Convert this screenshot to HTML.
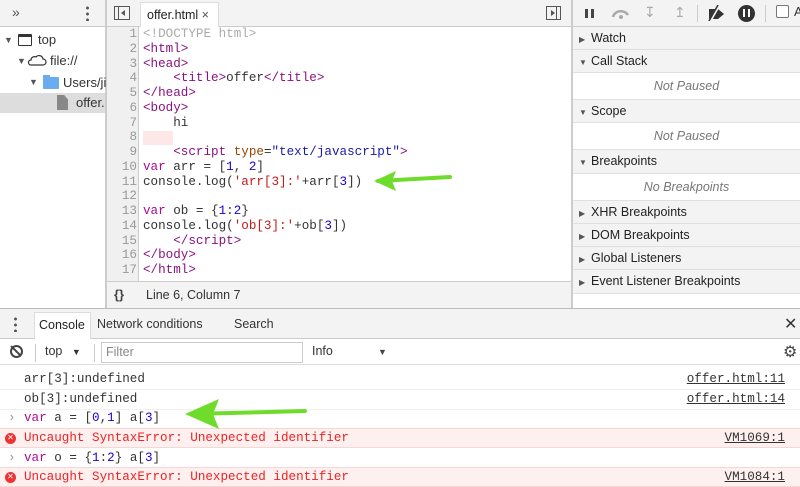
<!DOCTYPE html>
<html><head><meta charset="utf-8"><style>
*{margin:0;padding:0;box-sizing:border-box}
body{width:800px;height:483px;overflow:hidden;background:#fff;font-family:"Liberation Sans",sans-serif;font-size:13px;color:#333;position:relative}
.a{position:absolute}
.mono{font-family:"Liberation Mono",monospace;font-size:12.6px}
.tb{background:#f3f3f3;border-bottom:1px solid #ccc}
.code div{height:14.75px;line-height:14.75px;white-space:pre}
.t{color:#881280}.at{color:#994500}.s{color:#1a1aa6}.r{color:#c41a16}.n{color:#1c00cf}.k{color:#aa0d91}.g{color:#aaa}
.ln div{height:14.75px;line-height:14.75px;text-align:right;color:#999}
.sec{position:absolute;left:573px;width:227px;background:#f3f3f3;border-bottom:1px solid #e0e0e0;font-size:12.5px;color:#222;padding-left:6px}
.sec span{font-size:8px;color:#555;margin-right:5px;display:inline-block;width:7px}
.np{position:absolute;left:573px;width:227px;text-align:center;font-style:italic;color:#777;font-size:12.5px;border-bottom:1px solid #e0e0e0;background:#fff}
.row{position:absolute;left:0;width:800px;height:20px;line-height:19px;border-bottom:1px solid #f0f0f0;white-space:pre}
.err{background:#fff0f0;border-top:1px solid #f7d6d6;border-bottom:1px solid #f7d6d6;color:#e22}
.lnk{position:absolute;right:15px;color:#333;text-decoration:underline}
</style></head><body>
<!-- top toolbars -->
<div class="a tb" style="left:0;top:0;width:800px;height:27px"></div>
<div class="a" style="left:105px;top:0;width:2px;height:308px;background:#ccc"></div>
<div class="a" style="left:571px;top:0;width:2px;height:308px;background:#ccc"></div>
<div class="a" style="left:12px;top:4px;font-size:14px;color:#555">»</div>
<div class="a" style="left:86px;top:5px;width:3px;height:16px;background:radial-gradient(circle,#555 1.3px,transparent 1.6px) 0 0/3px 6px"></div>
<div class="a" style="left:114px;top:6px;width:16px;height:14px;border:1px solid #555"></div><div class="a" style="left:118px;top:7px;width:1px;height:12px;background:#555"></div><div class="a" style="left:121px;top:10px;border:3px solid transparent;border-right:4px solid #555;border-left:0"></div>
<div class="a" style="left:140px;top:2px;width:79px;height:25px;background:#fff;border:1px solid #ddd;border-bottom:none;padding:5px 6px;font-size:12.5px;color:#222">offer.html <span style="color:#555">×</span></div>
<div class="a" style="left:546px;top:6px;width:15px;height:14px;border:1px solid #555"></div><div class="a" style="left:556px;top:7px;width:1px;height:12px;background:#555"></div><div class="a" style="left:551px;top:10px;border:3px solid transparent;border-left:4px solid #555;border-right:0"></div>
<!-- debugger icons -->
<div class="a" style="left:585px;top:9px;width:3px;height:9px;background:#444"></div><div class="a" style="left:591px;top:9px;width:3px;height:9px;background:#444"></div>
<svg class="a" style="left:610px;top:5px" width="22" height="16"><path d="M3 12 A8 7 0 0 1 18 10" stroke="#aaa" stroke-width="2.5" fill="none"/><circle cx="11" cy="12" r="2" fill="#aaa"/></svg>
<div class="a" style="left:644px;top:4px;color:#aaa;font-size:14px">↧</div>
<div class="a" style="left:674px;top:4px;color:#aaa;font-size:14px">↥</div>
<div class="a" style="left:697px;top:5px;width:1px;height:17px;background:#ccc"></div>
<svg class="a" style="left:706px;top:5px" width="22" height="16"><path d="M3 4h9l6 5-6 5H3z" fill="#333"/><path d="M4 16 13 0" stroke="#f3f3f3" stroke-width="3"/><path d="M3 16 12 0" stroke="#333" stroke-width="1.5"/></svg>
<div class="a" style="left:738px;top:5px;width:17px;height:17px;border-radius:50%;background:#333"></div><div class="a" style="left:743px;top:9px;width:2px;height:8px;background:#fff"></div><div class="a" style="left:748px;top:9px;width:2px;height:8px;background:#fff"></div>
<div class="a" style="left:765px;top:5px;width:1px;height:17px;background:#ccc"></div>
<div class="a" style="left:776px;top:5px;width:13px;height:13px;border:1px solid #777;border-radius:2px;background:#fff"></div>
<div class="a" style="left:794px;top:4px;font-size:13px;color:#333">A</div>
<!-- nav tree -->
<div class="a" style="left:4px;top:35px;font-size:9px;color:#555">▼</div>
<div class="a" style="left:18px;top:34px;width:14px;height:12px;border:1.5px solid #333;border-top-width:3px;border-radius:1px"></div>
<div class="a" style="left:38px;top:32px;font-size:13px">top</div>
<div class="a" style="left:17px;top:56px;font-size:9px;color:#555">▼</div>
<svg class="a" style="left:27px;top:53px" width="20" height="13"><path d="M4 12h12a3 3 0 0 0 0-6 4 4 0 0 0-7-2 3.5 3.5 0 0 0-5 3 2.5 2.5 0 0 0 0 5z" fill="none" stroke="#333" stroke-width="1.2"/></svg>
<div class="a" style="left:50px;top:53px;font-size:13px">file://</div>
<div class="a" style="left:29px;top:77px;font-size:9px;color:#555">▼</div>
<div class="a" style="left:43px;top:77px;width:16px;height:12px;background:#6aabf2;border-radius:1px"></div><div class="a" style="left:43px;top:75px;width:7px;height:3px;background:#6aabf2"></div>
<div class="a" style="left:63px;top:75px;font-size:13px">Users/ji</div>
<div class="a" style="left:0;top:93px;width:105px;height:20px;background:#ddd"></div>
<div class="a" style="left:57px;top:95px;width:11px;height:15px;background:#888;clip-path:polygon(0 0,65% 0,100% 30%,100% 100%,0 100%)"></div>
<div class="a" style="left:76px;top:95px;font-size:13px">offer.</div>
<!-- editor -->
<div class="a" style="left:107px;top:27px;width:32px;height:254px;background:#f0f0f0;border-right:1px solid #ccc"></div>
<div class="a" style="left:143px;top:131px;width:30px;height:14px;background:#fde8e8"></div>
<div class="a ln mono" style="left:107px;top:27px;width:30px">
<div>1</div><div>2</div><div>3</div><div>4</div><div>5</div><div>6</div><div>7</div><div>8</div><div>9</div><div>10</div><div>11</div><div>12</div><div>13</div><div>14</div><div>15</div><div>16</div><div>17</div></div>
<div class="a code mono" style="left:143px;top:27px">
<div class="g">&lt;!DOCTYPE html&gt;</div>
<div class="t">&lt;html&gt;</div>
<div class="t">&lt;head&gt;</div>
<div>    <span class="t">&lt;title&gt;</span>offer<span class="t">&lt;/title&gt;</span></div>
<div class="t">&lt;/head&gt;</div>
<div class="t">&lt;body&gt;</div>
<div>    hi</div>
<div> </div>
<div>    <span class="t">&lt;script </span><span class="at">type</span>=<span class="s">"text/javascript"</span><span class="t">&gt;</span></div>
<div><span class="k">var</span> arr = [<span class="n">1</span>, <span class="n">2</span>]</div>
<div>console.log(<span class="r">'arr[3]:'</span>+arr[<span class="n">3</span>])</div>
<div> </div>
<div><span class="k">var</span> ob = {<span class="n">1</span>:<span class="n">2</span>}</div>
<div>console.log(<span class="r">'ob[3]:'</span>+ob[<span class="n">3</span>])</div>
<div>    <span class="t">&lt;/script&gt;</span></div>
<div class="t">&lt;/body&gt;</div>
<div class="t">&lt;/html&gt;</div>
</div>
<svg class="a" style="left:372px;top:170px" width="80" height="22"><path d="M6 11 L78 7" stroke="#6fdc2b" stroke-width="4" stroke-linecap="round"/><path d="M2 11 L24 1 L20 11 L24 21z" fill="#6fdc2b"/></svg>
<div class="a" style="left:107px;top:281px;width:464px;height:27px;background:#f3f3f3;border-top:1px solid #ccc"></div>
<div class="a" style="left:114px;top:287px;font-size:13px;font-weight:bold;color:#444">{}</div>
<div class="a" style="left:146px;top:288px;font-size:12.5px;color:#333">Line 6, Column 7</div>
<!-- right panel -->
<div class="sec" style="top:27px;height:23px;line-height:22px"><span>▶</span>Watch</div>
<div class="sec" style="top:50px;height:23px;line-height:22px"><span>▼</span>Call Stack</div>
<div class="np" style="top:73px;height:27px;line-height:26px">Not Paused</div>
<div class="sec" style="top:100px;height:23px;line-height:22px"><span>▼</span>Scope</div>
<div class="np" style="top:123px;height:27px;line-height:26px">Not Paused</div>
<div class="sec" style="top:150px;height:24px;line-height:23px"><span>▼</span>Breakpoints</div>
<div class="np" style="top:174px;height:27px;line-height:26px">No Breakpoints</div>
<div class="sec" style="top:201px;height:23px;line-height:22px"><span>▶</span>XHR Breakpoints</div>
<div class="sec" style="top:224px;height:23px;line-height:22px"><span>▶</span>DOM Breakpoints</div>
<div class="sec" style="top:247px;height:23px;line-height:22px"><span>▶</span>Global Listeners</div>
<div class="sec" style="top:270px;height:24px;line-height:23px"><span>▶</span>Event Listener Breakpoints</div>
<!-- drawer -->
<div class="a" style="left:0;top:308px;width:800px;height:1px;background:#bbb"></div>
<div class="a tb" style="left:0;top:309px;width:800px;height:30px"></div>
<div class="a" style="left:14px;top:316px;width:3px;height:16px;background:radial-gradient(circle,#555 1.3px,transparent 1.6px) 0 0/3px 6px"></div>
<div class="a" style="left:34px;top:312px;width:57px;height:27px;background:#fff;border:1px solid #ddd;border-bottom:none;font-size:12.5px;padding:5px 4px;color:#222">Console</div>
<div class="a" style="left:97px;top:317px;font-size:12.5px">Network conditions</div>
<div class="a" style="left:234px;top:317px;font-size:12.5px">Search</div>
<div class="a" style="left:784px;top:314px;font-size:16px;color:#333">✕</div>
<div class="a" style="left:0;top:339px;width:800px;height:26px;border-bottom:1px solid #ddd"></div>
<div class="a" style="left:10px;top:345px;width:13px;height:13px;border:2px solid #444;border-radius:50%"></div>
<div class="a" style="left:15px;top:344px;width:2px;height:14px;background:#444;transform:rotate(-45deg)"></div>
<div class="a" style="left:35px;top:344px;width:1px;height:18px;background:#ccc"></div>
<div class="a" style="left:45px;top:344px;font-size:12.5px">top <span style="font-size:9px;margin-left:6px">▼</span></div>
<div class="a" style="left:94px;top:344px;width:1px;height:18px;background:#ccc"></div>
<div class="a" style="left:101px;top:342px;width:202px;height:21px;border:1px solid #ccc;padding:2px 4px;color:#888;font-size:12.5px">Filter</div>
<div class="a" style="left:312px;top:344px;font-size:12.5px">Info</div>
<div class="a" style="left:378px;top:347px;font-size:9px;color:#444">▼</div>
<div class="a" style="left:783px;top:342px;font-size:16px;color:#444">⚙</div>
<div class="row mono" style="top:370px;padding-left:24px">arr[3]:undefined<span class="lnk">offer.html:11</span></div>
<div class="row mono" style="top:390px;padding-left:24px">ob[3]:undefined<span class="lnk">offer.html:14</span></div>
<div class="row mono" style="top:409px;padding-left:24px"><span class="a" style="left:8px;color:#999">›</span><span class="k">var</span> a = [<span class="n">0</span>,<span class="n">1</span>] a[<span class="n">3</span>]</div>
<div class="row mono err" style="top:428px;padding-left:24px"><span class="a" style="left:5px;top:4px;width:11px;height:11px;border-radius:50%;background:#e33;color:#fff;font-size:8px;line-height:11px;text-align:center">✕</span>Uncaught SyntaxError: Unexpected identifier<span class="lnk">VM1069:1</span></div>
<div class="row mono" style="top:449px;padding-left:24px"><span class="a" style="left:8px;color:#999">›</span><span class="k">var</span> o = {<span class="n">1</span>:<span class="n">2</span>} a[<span class="n">3</span>]</div>
<div class="row mono err" style="top:467px;padding-left:24px"><span class="a" style="left:5px;top:4px;width:11px;height:11px;border-radius:50%;background:#e33;color:#fff;font-size:8px;line-height:11px;text-align:center">✕</span>Uncaught SyntaxError: Unexpected identifier<span class="lnk">VM1084:1</span></div>
<svg class="a" style="left:183px;top:398px" width="125" height="32"><path d="M8 16 L122 13" stroke="#6fdc2b" stroke-width="4" stroke-linecap="round"/><path d="M2 16 L36 1 L30 16 L36 31z" fill="#6fdc2b"/></svg>
</body></html>
